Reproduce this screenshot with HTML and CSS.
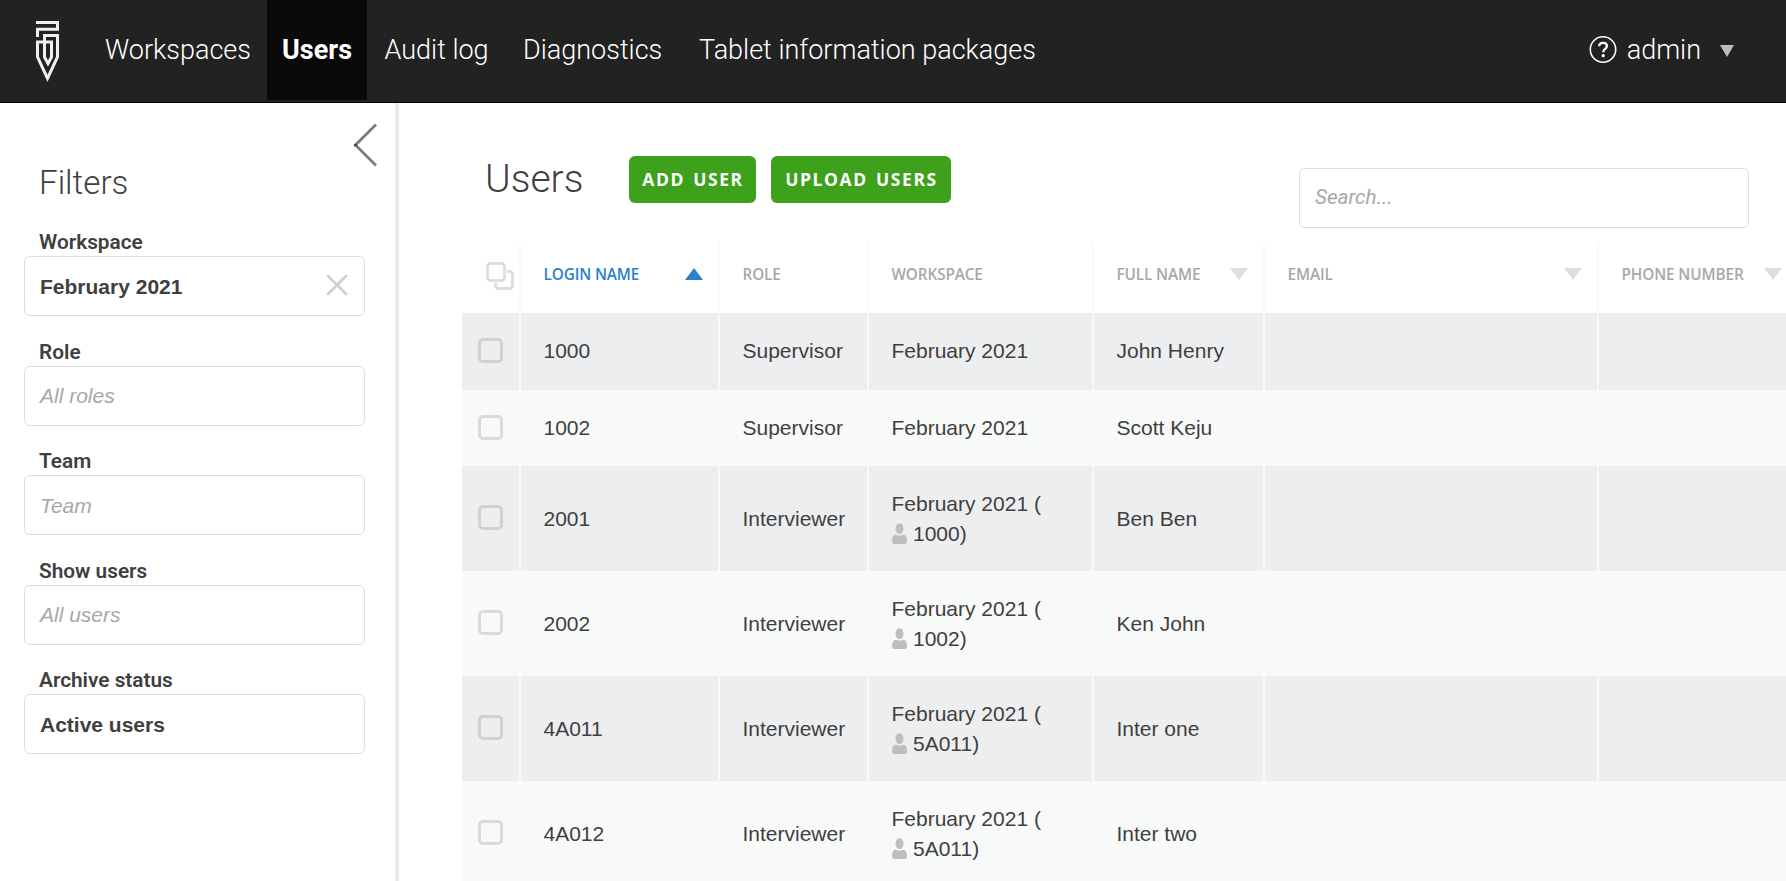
FILE: index.html
```html
<!DOCTYPE html>
<html lang="en">
<head>
<meta charset="utf-8">
<title>Users</title>
<link rel="stylesheet" href="styles.css">
</head>
<body>
<header class="topbar">
  <svg class="logo" viewBox="0 0 23 62" width="23" height="62" fill="none" stroke="#efefef" stroke-width="3">
    <path d="M0 1.5H21.5V8.2H1.5V16"/>
    <path d="M8.500 14.500H21.500V36L11.500 57.500 1.500 36V21H15.500V36L12 42.500 8.500 36Z"/>
  </svg>
  <nav class="nav">
    <a class="nav-item nav-workspaces">Workspaces</a>
    <a class="nav-item nav-users active">Users</a>
    <a class="nav-item nav-audit">Audit log</a>
    <a class="nav-item nav-diag">Diagnostics</a>
    <a class="nav-item nav-tablet">Tablet information packages</a>
  </nav>
  <div class="account">
    <svg class="help" viewBox="0 0 28 28" width="28" height="28" fill="none" stroke="#fff">
      <circle cx="14" cy="13.500" r="12.700" stroke-width="1.600"/>
      <path d="M10.200 10.200C10.200 8 11.700 6.800 14 6.800s3.900 1.200 3.900 3.200c0 2.900-3.700 2.900-3.700 6.200" stroke-width="2.300"/>
      <circle cx="14.200" cy="19.700" r="1.600" fill="#fff" stroke="none"/>
    </svg>
    <span class="account-name">admin</span>
    <svg class="caret" viewBox="0 0 14 12" width="14" height="12"><path d="M0 0H14L7 12Z" fill="#bdbdbd"/></svg>
  </div>
</header>
<div class="layout">
  <aside class="sidebar">
    <svg class="collapse" viewBox="0 0 24 44" width="24" height="44" fill="none" stroke="#7d7d7d" stroke-width="2.800"><path d="M23 1.500L2.500 22 23 42.500"/><circle cx="2.500" cy="22" r="1.600" fill="#444" stroke="none"/></svg>
    <h2 class="filters-title">Filters</h2>
    <div class="filter"><label class="filter-label">Workspace</label><div class="field"><span class="value">February 2021</span>
      <svg class="clear" viewBox="0 0 22 22" width="22" height="22" stroke="#d0d0d0" stroke-width="2.800" stroke-linecap="round"><path d="M2 2L20 20M20 2L2 20"/></svg></div></div>
    <div class="filter"><label class="filter-label">Role</label><div class="field"><span class="hint">All roles</span></div></div>
    <div class="filter"><label class="filter-label">Team</label><div class="field"><span class="hint">Team</span></div></div>
    <div class="filter"><label class="filter-label">Show users</label><div class="field"><span class="hint">All users</span></div></div>
    <div class="filter"><label class="filter-label">Archive status</label><div class="field"><span class="value">Active users</span></div></div>
  </aside>
  <main class="main">
    <div class="page-head">
      <h1 class="page-title">Users</h1>
      <button class="btn btn-add">ADD USER</button>
      <button class="btn btn-upload">UPLOAD USERS</button>
      <div class="search">Search...</div>
    </div>
    <table class="users">
      <colgroup><col class="c-check"><col class="c-login"><col class="c-role"><col class="c-space"><col class="c-name"><col class="c-mail"><col class="c-phone"></colgroup>
      <thead>
        <tr>
          <th class="check-cell"><svg class="select-all" viewBox="0 0 28 28" width="28" height="28" fill="none" stroke="#dedede" stroke-width="3"><rect x="1.500" y="1.500" width="17" height="17" rx="3"/><path d="M21 9.500h2.500a3 3 0 0 1 3 3v11a3 3 0 0 1-3 3h-11a3 3 0 0 1-3-3V21"/></svg></th>
          <th class="sorted"><div class="th">LOGIN NAME<svg class="sort" viewBox="0 0 18 12" width="18" height="12"><path d="M0 12H18L9 0Z" fill="#2a81cb"/></svg></div></th>
          <th><div class="th">ROLE</div></th>
          <th><div class="th">WORKSPACE</div></th>
          <th><div class="th">FULL NAME<svg class="sort" viewBox="0 0 18 12" width="18" height="12"><path d="M0 0H18L9 12Z" fill="#dcdfe2"/></svg></div></th>
          <th><div class="th">EMAIL<svg class="sort" viewBox="0 0 18 12" width="18" height="12"><path d="M0 0H18L9 12Z" fill="#dcdfe2"/></svg></div></th>
          <th class="th-phone"><div class="th">PHONE NUMBER<svg class="sort" viewBox="0 0 18 12" width="18" height="12"><path d="M0 0H18L9 12Z" fill="#dcdfe2"/></svg></div></th>
        </tr>
      </thead>
      <tbody>
        <tr class="row-first"><td class="check-cell"><span class="box"></span></td><td>1000</td><td>Supervisor</td><td>February 2021</td><td>John Henry</td><td></td><td></td></tr>
        <tr class="row-short"><td class="check-cell"><span class="box"></span></td><td>1002</td><td>Supervisor</td><td>February 2021</td><td>Scott Keju</td><td></td><td></td></tr>
        <tr class="row-tall"><td class="check-cell"><span class="box"></span></td><td>2001</td><td>Interviewer</td><td>February 2021 (<br><svg class="person" viewBox="0 0 15 21" width="15" height="21" fill="#bdbebf"><ellipse cx="7.500" cy="5.600" rx="4" ry="5.400"/><path d="M2.500 12C4 11.400 4.600 12.600 7.500 12.600S11 11.400 12.500 12C14.500 13 15 16 15 18.500 15 20.500 13.500 21 12 21H3C1.500 21 0 20.500 0 18.500 0 16 .5 13 2.500 12Z"/></svg>1000)</td><td>Ben Ben</td><td></td><td></td></tr>
        <tr class="row-tall"><td class="check-cell"><span class="box"></span></td><td>2002</td><td>Interviewer</td><td>February 2021 (<br><svg class="person" viewBox="0 0 15 21" width="15" height="21" fill="#bdbebf"><ellipse cx="7.500" cy="5.600" rx="4" ry="5.400"/><path d="M2.500 12C4 11.400 4.600 12.600 7.500 12.600S11 11.400 12.500 12C14.500 13 15 16 15 18.500 15 20.500 13.500 21 12 21H3C1.500 21 0 20.500 0 18.500 0 16 .5 13 2.500 12Z"/></svg>1002)</td><td>Ken John</td><td></td><td></td></tr>
        <tr class="row-tall"><td class="check-cell"><span class="box"></span></td><td>4A011</td><td>Interviewer</td><td>February 2021 (<br><svg class="person" viewBox="0 0 15 21" width="15" height="21" fill="#bdbebf"><ellipse cx="7.500" cy="5.600" rx="4" ry="5.400"/><path d="M2.500 12C4 11.400 4.600 12.600 7.500 12.600S11 11.400 12.500 12C14.500 13 15 16 15 18.500 15 20.500 13.500 21 12 21H3C1.500 21 0 20.500 0 18.500 0 16 .5 13 2.500 12Z"/></svg>5A011)</td><td>Inter one</td><td></td><td></td></tr>
        <tr class="row-tall"><td class="check-cell"><span class="box"></span></td><td>4A012</td><td>Interviewer</td><td>February 2021 (<br><svg class="person" viewBox="0 0 15 21" width="15" height="21" fill="#bdbebf"><ellipse cx="7.500" cy="5.600" rx="4" ry="5.400"/><path d="M2.500 12C4 11.400 4.600 12.600 7.500 12.600S11 11.400 12.500 12C14.500 13 15 16 15 18.500 15 20.500 13.500 21 12 21H3C1.500 21 0 20.500 0 18.500 0 16 .5 13 2.500 12Z"/></svg>5A011)</td><td>Inter two</td><td></td><td></td></tr>
      </tbody>
    </table>
  </main>
</div>
</body>
</html>
```
FILE: styles.css
```css
* { box-sizing: border-box; }
html, body { height: 100%; overflow: hidden; }
body {
  margin: 0;
  display: flex;
  flex-direction: column;
  background: #fff;
  color: #3f3f3f;
  font-family: "Liberation Sans", Arial, sans-serif;
  font-size: 21px;
}

/* Top bar */
.topbar {
  flex: none;
  height: 103px;
  display: flex;
  align-items: flex-start;
  padding-left: 36px;
  background: #222;
  border-bottom: 1px solid #000;
  font-family: Roboto, sans-serif;
  font-weight: 300;
  font-size: 27px;
  color: #fff;
}
.logo { flex: none; margin-top: 21px; }
.nav { display: flex; margin-left: 30px; }
.nav-item {
  height: 100px;
  line-height: 101px;
  padding-left: 16px;
  white-space: nowrap;
}
.nav-workspaces { width: 178px; }
.nav-users { width: 100px; padding-left: 15px; }
.nav-audit { width: 140px; padding-left: 17.5px; }
.nav-diag { width: 176px; }
.nav-tablet { width: 370px; }
.active { height: 100px; overflow: hidden; background: #090909; font-weight: 700; }
.account {
  height: 100px;
  margin-left: auto;
  margin-right: 52px;
  display: flex;
  align-items: center;
}
.help { margin-right: 10px; }
.account-name { line-height: 99px; margin-right: 19px; }
.caret { margin-top: 2px; }

/* Layout */
.layout { flex: 1; min-height: 0; display: flex; }
.sidebar {
  flex: none;
  width: 399px;
  padding: 20px 30px 0 24px;
  border-right: 4px solid #ebebeb;
  display: flex;
  flex-direction: column;
}
.collapse { align-self: flex-end; margin-right: -12px; }
.filters-title {
  margin: -4px 0 1px 15px;
  font: 300 33.200px/40px Roboto, sans-serif;
}
.filter { height: 109.5px; padding-top: 24px; }
.filter-label {
  display: block;
  margin-bottom: 1px;
  padding: 2px 0 0 15px;
  font: 600 20.800px/25px Roboto, sans-serif;
}
.field {
  height: 60px;
  width: 341px;
  padding: 1px 16px 0 15px;
  display: flex;
  align-items: center;
  justify-content: space-between;
  border: 1px solid #dcdee0;
  border-radius: 6px;
}
.value { font-weight: 700; }
.hint { font-style: italic; color: #a7a8a9; }
.clear { margin-top: -3px; }

/* Main */
.main { flex: 1; min-width: 0; padding-left: 63px; overflow: hidden; }
.page-head {
  height: 140px;
  display: flex;
  align-items: flex-start;
  padding-left: 23px;
}
.page-title {
  width: 144px;
  margin: 52px 0 0;
  font: 300 39px/48px Roboto, sans-serif;
}
.btn {
  height: 47px;
  margin: 53px 15px 0 0;
  padding: 0 0 0 1px;
  border: 0;
  border-radius: 6px;
  background: #3ea11b;
  color: #fff;
  font: 700 17.500px/47px "Open Sans", sans-serif;
  letter-spacing: 1.6px;
  word-spacing: 2px;
  white-space: nowrap;
}
.btn-add { width: 127px; }
.btn-upload { width: 180px; }
.search {
  width: 450px;
  height: 60px;
  margin: 65px 37px 0 auto;
  padding-left: 15px;
  border: 1px solid #dcdee0;
  border-radius: 6px;
  color: #a7a8a9;
  font: italic 400 20.700px/56px Roboto, sans-serif;
}

/* Table */
.users {
  width: 1345px;
  table-layout: fixed;
  border-collapse: separate;
  border-spacing: 0;
}
.c-check { width: 59px; }
.c-login { width: 199px; }
.c-role { width: 149px; }
.c-space { width: 225px; }
.c-name { width: 171px; }
.c-mail { width: 334px; }
.c-phone { width: 208px; }
.users th, .users td {
  padding: 0 0 0 22.5px;
  border-right: 2px solid #f8faf9;
  text-align: left;
  vertical-align: middle;
}
.users th {
  height: 70px;
  padding-bottom: 8px;
  color: #a7a8a9;
  font: 600 15.300px/20px "Open Sans", sans-serif;
  letter-spacing: -0.1px;
}
.users th.sorted { color: #2a81cb; }
.users td { line-height: 30px; }
.th { display: flex; align-items: center; justify-content: space-between; padding-right: 15px; white-space: nowrap; }
.sorted .th { padding-right: 15px; }
.th-phone .th { padding-right: 23px; }
.users .check-cell { padding-left: 16px; }
.users th.check-cell { padding: 0 0 4px 24px; }
.select-all { display: block; }
.row-first { height: 77px; background: #edeef0; }
.row-first td { padding-bottom: 2px; }
.row-short { height: 76px; background: #f8faf9; }
.row-tall { height: 105px; background: #f8faf9; }
.row-tall:nth-child(odd) { background: #edeef0; }
.box {
  display: block;
  width: 25px;
  height: 25px;
  margin-top: -2px;
  border: 3px solid rgba(0, 0, 0, 0.12);
  border-radius: 5px;
}
.row-first .box { margin-top: 0; }
.person { vertical-align: -3px; margin-right: 6.5px; }
```
